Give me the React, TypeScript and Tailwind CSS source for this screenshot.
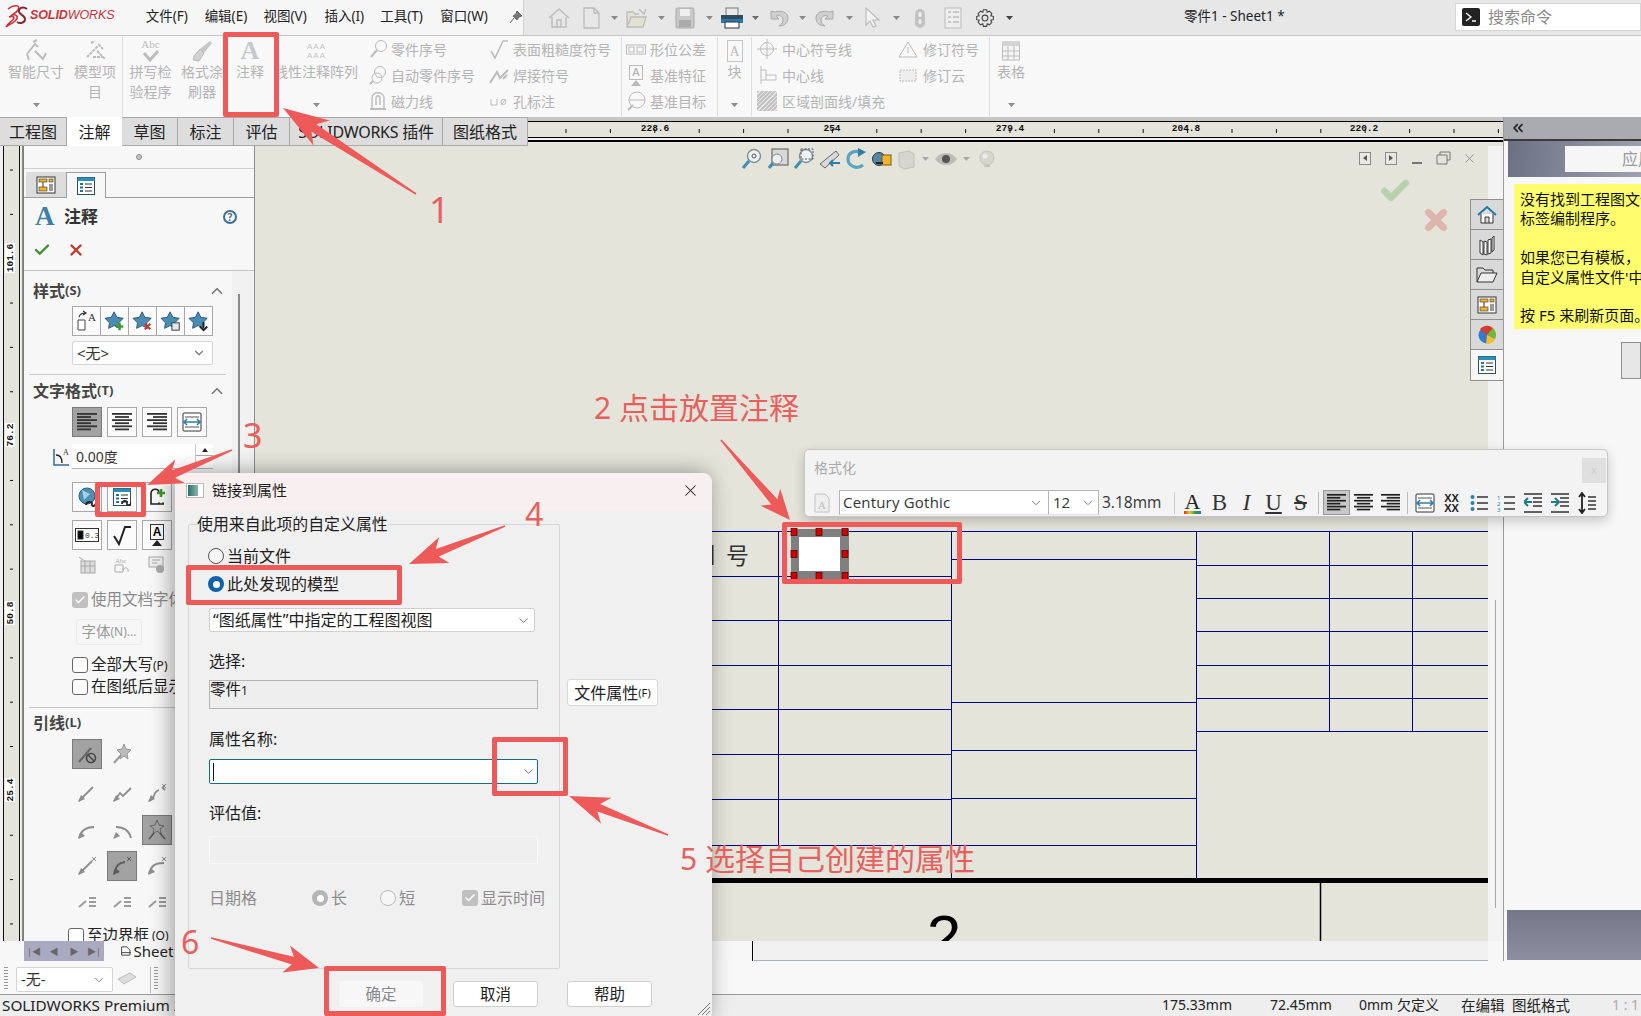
import React from "react";
import { Check, X, ChevronDown, ChevronUp, ChevronsLeft } from "lucide-react";

const G = "#bcbcbc";
const RED = "#ee5a5a";

type SP = { w?: number; h?: number; vb?: string; children?: React.ReactNode; className?: string };
const S = ({ w = 24, h = 24, vb, children, className }: SP) => (
  <svg width={w} height={h} viewBox={vb ?? `0 0 ${w} ${h}`} fill="none" className={className}>
    {children}
  </svg>
);

const Caret = ({ c = "#6b6b6b" }: { c?: string }) => (
  <S w={7} h={4}>
    <polygon points="0,0 7,0 3.5,4" fill={c} />
  </S>
);

/* ---------- top toolbar ---------- */
const Logo = () => (
  <div className="flex w-[146px] items-center pl-[5px] pb-[2px]">
    <S w={24} h={26}>
      <path d="M3 6 C9 1 16 2 13 7 C11 10 8 11 7 12 C12 11 14 14 10 18 C7 21 3 22 1 24 C4 19 8 18 9 15 C9 13 6 13 4 14" stroke="#c8343a" strokeWidth="1.6" />
      <path d="M22 6 C18 3 13 5 14 9 C15 12 20 12 20 16 C20 20 15 21 12 19" stroke="#8a2430" strokeWidth="2" />
    </S>
    <span className="ml-[1px] text-[12.5px] leading-none tracking-[-0.1px] font-['Liberation_Sans',sans-serif] whitespace-nowrap">
      <span className="font-bold italic text-[#c8343a]">SOLID</span>
      <span className="italic text-[#c8343a]">WORKS</span>
    </span>
  </div>
);

const HomeIc = ({ c = G }: { c?: string }) => (
  <S>
    <path d="M2 12 L12 3 L22 12 M5 11 V21 H19 V11 M10 21 V14 H14 V21" stroke={c} strokeWidth="1.4" />
  </S>
);
const DocIc = () => (
  <S>
    <path d="M5 2 H15 L20 7 V22 H5 Z M15 2 V7 H20" stroke={G} strokeWidth="1.3" />
  </S>
);
const FolderTopIc = () => (
  <S>
    <path d="M3 21 V6 H9 L11 8 H15 M3 21 L7 11 H22 L19 21 Z" stroke={G} strokeWidth="1.3" fill="#e2e2d2" />
    <path d="M15 3 L20 8 L22 3" stroke={G} strokeWidth="1.4" />
  </S>
);
const SaveIc = () => (
  <S>
    <rect x="3" y="2" width="18" height="20" rx="1.5" fill="#c8c8c8" stroke="#aaa" />
    <rect x="7" y="3" width="10" height="7" fill="#eee" />
    <rect x="6" y="14" width="12" height="7" fill="#aaa" />
  </S>
);
const PrintIc = () => (
  <S w={24} h={24}>
    <rect x="6" y="2" width="12" height="8" fill="#e9e9e9" stroke="#777" />
    <rect x="1" y="9" width="22" height="8" fill="#35495c" />
    <rect x="1" y="13" width="22" height="4" fill="#1f7bb5" />
    <rect x="5" y="16" width="14" height="6" fill="#fff" stroke="#333" />
  </S>
);
const UndoIc = ({ flip }: { flip?: boolean }) => (
  <S className={flip ? "-scale-x-100" : ""}>
    <path d="M5 5 V13 H13 L10 10 C13 9 17 10 17 14 C17 17 15 19 13 20 C18 20 22 17 22 12 C22 6 15 4 9 6 Z" fill="#cfcfcf" stroke="#aaa" />
  </S>
);
const CursorIc = () => (
  <S>
    <path d="M6 2 V19 L10 15 L13 21 L16 20 L13 14 L19 14 Z" stroke={G} strokeWidth="1.2" fill="#f2f2f2" />
  </S>
);
const MouseIc = () => (
  <S w={14} h={24}>
    <rect x="2" y="3" width="10" height="19" rx="5" fill="#c3c3c3" />
    <rect x="5.5" y="6" width="3" height="5" rx="1.5" fill="#eee" />
    <rect x="5.5" y="13" width="3" height="5" rx="1.5" fill="#eee" />
  </S>
);
const ListTopIc = () => (
  <S>
    <rect x="4" y="2" width="16" height="20" stroke={G} fill="#eee" />
    <path d="M7 6 H10 M7 11 H10 M7 16 H10 M12 6 H18 M12 11 H18 M12 16 H18" stroke={G} strokeWidth="1.6" />
  </S>
);
const GearIc = () => (
  <S w={20} h={20} vb="0 0 24 24">
    <circle cx="12" cy="12" r="3.5" stroke="#444" strokeWidth="1.3" />
    <path d="M10 2 H14 L14.6 5 L17.3 3.8 L20.2 6.7 L19 9.4 L22 10 V14 L19 14.6 L20.2 17.3 L17.3 20.2 L14.6 19 L14 22 H10 L9.4 19 L6.7 20.2 L3.8 17.3 L5 14.6 L2 14 V10 L5 9.4 L3.8 6.7 L6.7 3.8 L9.4 5 Z" stroke="#444" strokeWidth="1.3" />
  </S>
);

const TopBar = () => (
  <div className="flex h-[36px] shrink-0 border-b border-[#c4c4c4] bg-[#e7e7e7]">
    <div className="flex w-[524px] shrink-0 items-center border-r border-[#d2d2d2] bg-[#f6f6f6] pb-[2px] text-[13.5px] text-[#222]">
      <Logo />
      <span className="w-[59px] whitespace-nowrap">文件(F)</span>
      <span className="w-[59px] whitespace-nowrap">编辑(E)</span>
      <span className="w-[61px] whitespace-nowrap">视图(V)</span>
      <span className="w-[56px] whitespace-nowrap">插入(I)</span>
      <span className="w-[60px] whitespace-nowrap">工具(T)</span>
      <span className="w-[69px] whitespace-nowrap">窗口(W)</span>
      <svg width="14" height="14" viewBox="0 0 14 14"><path d="M8 1 L13 6 L10 7 L8 10 L4 6 L7 4 Z M5 8 L1 13" stroke="#666" fill="#777" /></svg>
    </div>
    <div className="w-[19px]" />
    <div className="flex w-[32px] items-center justify-center"><HomeIc /></div>
    <div className="flex w-[32px] items-center justify-center"><DocIc /></div>
    <div className="flex w-[14px] items-center justify-center"><Caret c="#888" /></div>
    <div className="flex w-[30px] items-center justify-center"><FolderTopIc /></div>
    <div className="flex w-[20px] items-center justify-center"><Caret c="#888" /></div>
    <div className="flex w-[28px] items-center justify-center"><SaveIc /></div>
    <div className="flex w-[20px] items-center justify-center"><Caret c="#888" /></div>
    <div className="flex w-[26px] items-center justify-center"><PrintIc /></div>
    <div className="flex w-[20px] items-center justify-center"><Caret /></div>
    <div className="flex w-[26px] items-center justify-center"><UndoIc /></div>
    <div className="flex w-[22px] items-center justify-center"><Caret c="#888" /></div>
    <div className="flex w-[26px] items-center justify-center"><UndoIc flip /></div>
    <div className="flex w-[20px] items-center justify-center"><Caret c="#888" /></div>
    <div className="flex w-[26px] items-center justify-center"><CursorIc /></div>
    <div className="flex w-[22px] items-center justify-center"><Caret c="#888" /></div>
    <div className="flex w-[26px] items-center justify-center"><MouseIc /></div>
    <div className="flex w-[40px] items-center justify-center"><ListTopIc /></div>
    <div className="flex w-[24px] items-center justify-center"><GearIc /></div>
    <div className="flex w-[24px] items-center justify-center"><Caret c="#444" /></div>
    <div className="ml-[163px] flex items-center pb-[2px] text-[13.5px] text-[#222] whitespace-nowrap">零件1 - Sheet1 *</div>
    <div className="ml-auto mt-[3px] flex h-[28px] w-[186px] items-center border border-[#d6d6d6] bg-white pl-[6px]">
      <div className="flex h-[18px] w-[18px] items-center justify-center rounded-[2px] bg-[#222]">
        <svg width="12" height="12" viewBox="0 0 12 12"><path d="M1 2 L6 6 L1 10 M7 10 H11" stroke="#fff" strokeWidth="1.3" fill="none" /></svg>
      </div>
      <span className="ml-[8px] text-[16px] text-[#8a8a8a]">搜索命令</span>
    </div>
  </div>
);

/* ---------- ribbon ---------- */
const DimIc = () => (
  <S>
    <path d="M3 15 L11 5 L14 8 M9 3 L13 1 M5 21 L3 15 M11 12 L19 20 L22 14" stroke={G} strokeWidth="2" />
  </S>
);
const ModelIc = () => (
  <S>
    <path d="M4 18 L16 6 L20 10 M8 4 L12 2 M10 18 L20 18 M14 12 L22 20" stroke={G} strokeWidth="2" strokeDasharray="3 1" />
  </S>
);
const SpellIc = () => (
  <div className="flex h-[24px] w-[24px] flex-col items-center">
    <span className="font-['Liberation_Serif',serif] text-[11px] leading-[11px] text-[#bbb]">Abc</span>
    <svg width="20" height="12" viewBox="0 0 20 12"><path d="M3 3 L9 10 L17 1" stroke={G} strokeWidth="3" fill="none" /></svg>
  </div>
);
const BrushIc = () => (
  <S>
    <path d="M20 2 L22 4 L14 14 L10 10 Z" fill="#c6c6c6" />
    <path d="M10 10 L14 14 L9 22 L3 21 L4 17 Z" fill="#d2d2d2" stroke="#bbb" />
  </S>
);
const NoteA = () => (
  <span className="block h-[26px] text-[26px] leading-[26px] font-bold font-['Liberation_Serif',serif] text-[#c5c9cc]">A</span>
);
const PatternIc = () => (
  <div className="grid h-[24px] grid-cols-3 content-center gap-x-[1px] text-[8px] leading-[9px] text-[#c4c4c4] font-['Liberation_Sans',sans-serif]">
    <span>A</span><span>A</span><span>A</span><span>A</span><span>A</span><span>A</span>
  </div>
);
const BlockIc = () => (
  <div className="flex h-[22px] w-[16px] items-center justify-center border border-[#c4c4c4] font-['Liberation_Serif',serif] text-[14px] text-[#bbb]">A</div>
);
const TableIc = () => (
  <S w={18} h={20}>
    <rect x="0.5" y="1" width="17" height="18" stroke={G} fill="#f4f4f4" />
    <rect x="0.5" y="1" width="17" height="4" fill="#d3d3d3" />
    <path d="M0 10 H18 M0 15 H18 M6 5 V19 M12 5 V19" stroke={G} />
  </S>
);

const Big = ({ w, icon, lines, caret }: { w: string; icon: React.ReactNode; lines: string[]; caret?: boolean }) => (
  <div className={`flex h-full shrink-0 flex-col items-center ${w}`}>
    <div className="mt-[4px] flex h-[22px] items-center justify-center">{icon}</div>
    <div className="text-center text-[14px] leading-[20px] text-[#b4b4b4] whitespace-nowrap">
      {lines.map((l) => (
        <div key={l}>{l}</div>
      ))}
    </div>
    {caret && (
      <div className="mt-auto mb-[10px]">
        <Caret c="#8a8a8a" />
      </div>
    )}
  </div>
);
const Sep = () => <div className="my-[1px] w-px shrink-0 bg-[#dedede]" />;

const SmallRow = ({ zone, icon, label }: { zone: string; icon: React.ReactNode; label: string }) => (
  <div className="flex h-[26px] items-center whitespace-nowrap text-[14px] text-[#b4b4b4]">
    <div className={`flex justify-center ${zone}`}>{icon}</div>
    {label}
  </div>
);

const Mini = ({ children }: { children: React.ReactNode }) => <S w={20} h={20}>{children}</S>;
const I1 = () => (<Mini><circle cx="13" cy="7" r="5.5" stroke={G} /><path d="M9 11 L3 18" stroke={G} strokeWidth="2" /></Mini>);
const I2 = () => (<Mini><circle cx="12" cy="7" r="5.5" stroke={G} /><circle cx="9" cy="13" r="5" stroke={G} /><path d="M5 16 L2 19" stroke={G} strokeWidth="2" /></Mini>);
const I3 = () => (<Mini><path d="M4 18 V7 C4 0 16 0 16 7 V18 M8 14 V7 C8 4 12 4 12 7 V14" stroke={G} strokeWidth="1.4" /><path d="M2 18 H18" stroke={G} strokeWidth="2" /></Mini>);
const I4 = () => (<Mini><path d="M2 12 L6 19 L14 2 H19" stroke={G} strokeWidth="1.6" /></Mini>);
const I5 = () => (<Mini><path d="M1 18 L8 7 L11 13 L19 5 M14 14 L18 10" stroke={G} strokeWidth="2" /></Mini>);
const I6 = () => (<Mini><path d="M2 8 V14 H8 V8 M12 14 L17 8" stroke={G} /><circle cx="14.5" cy="11" r="2.5" stroke={G} /></Mini>);
const I7 = () => (<Mini><rect x="0.5" y="6" width="19" height="9" stroke={G} /><rect x="3" y="8" width="5" height="5" stroke={G} /><rect x="11" y="8" width="6" height="5" stroke={G} /></Mini>);
const I8 = () => (<div className="flex w-[14px] flex-col items-center"><div className="h-[15px] w-[14px] border border-[#bbb] text-center font-['Liberation_Sans',sans-serif] text-[11px] leading-[13px] text-[#aaa]">A</div><div className="h-0 w-0 border-x-[5px] border-b-[6px] border-x-transparent border-b-[#bbb]" /></div>);
const I9 = () => (<Mini><circle cx="11" cy="9" r="8" stroke={G} /><path d="M3 9 H19" stroke={G} /><path d="M7 14 L2 19" stroke={G} strokeWidth="2" /></Mini>);
const I10 = () => (<Mini><circle cx="10" cy="10" r="6.5" stroke={G} /><path d="M10 0 V20 M0 10 H20" stroke={G} /></Mini>);
const I11 = () => (<Mini><path d="M4 1 V19 M4 5 H9 V15 H4 M9 10 H19 V15 H9" stroke={G} /></Mini>);
const I12 = () => (
  <div className="h-[20px] w-[20px] bg-[repeating-linear-gradient(135deg,#c4c4c4,#c4c4c4_2px,#e6e6e6_2px,#e6e6e6_3px)]" />
);
const I13 = () => (<Mini><path d="M10 3 L19 18 H1 Z" stroke={G} /><path d="M10 8 V14" stroke={G} /></Mini>);
const I14 = () => (<Mini><rect x="2" y="5" width="16" height="11" stroke={G} strokeDasharray="2 1" fill="#eee" /></Mini>);

const Ribbon = () => (
  <div className="flex h-[81px] shrink-0 bg-[#f8f8f8]">
    <Big w="w-[72px]" icon={<DimIc />} lines={["智能尺寸"]} caret />
    <Big w="w-[46px]" icon={<ModelIc />} lines={["模型项", "目"]} />
    <div className="w-[4px] shrink-0" />
    <Sep />
    <Big w="w-[55px]" icon={<SpellIc />} lines={["拼写检", "验程序"]} />
    <Big w="w-[48px]" icon={<BrushIc />} lines={["格式涂", "刷器"]} />
    <Big w="w-[48px]" icon={<NoteA />} lines={["注释"]} />
    <Big w="w-[84px]" icon={<PatternIc />} lines={["线性注释阵列"]} caret />
    <div className="w-[7px] shrink-0" />
    <div className="w-[120px] shrink-0">
      <SmallRow zone="w-[26px]" icon={<I1 />} label="零件序号" />
      <SmallRow zone="w-[26px]" icon={<I2 />} label="自动零件序号" />
      <SmallRow zone="w-[26px]" icon={<I3 />} label="磁力线" />
    </div>
    <div className="w-[136px] shrink-0">
      <SmallRow zone="w-[28px]" icon={<I4 />} label="表面粗糙度符号" />
      <SmallRow zone="w-[28px]" icon={<I5 />} label="焊接符号" />
      <SmallRow zone="w-[28px]" icon={<I6 />} label="孔标注" />
    </div>
    <Sep />
    <div className="w-[95px] shrink-0">
      <SmallRow zone="w-[28px]" icon={<I7 />} label="形位公差" />
      <SmallRow zone="w-[28px]" icon={<I8 />} label="基准特征" />
      <SmallRow zone="w-[28px]" icon={<I9 />} label="基准目标" />
    </div>
    <Sep />
    <Big w="w-[33px]" icon={<BlockIc />} lines={["块"]} caret />
    <Sep />
    <div className="w-[140px] shrink-0">
      <SmallRow zone="w-[30px]" icon={<I10 />} label="中心符号线" />
      <SmallRow zone="w-[30px]" icon={<I11 />} label="中心线" />
      <SmallRow zone="w-[30px]" icon={<I12 />} label="区域剖面线/填充" />
    </div>
    <div className="w-[97px] shrink-0">
      <SmallRow zone="w-[31px]" icon={<I13 />} label="修订符号" />
      <SmallRow zone="w-[31px]" icon={<I14 />} label="修订云" />
    </div>
    <Sep />
    <Big w="w-[42px]" icon={<TableIc />} lines={["表格"]} caret />
  </div>
);

/* ---------- tabs + rulers ---------- */
const tick = "#111";
const HRuler = () => {
  const ticks: number[] = [];
  for (let x = 566; x < 1503; x += 44.4) ticks.push(x);
  const labels: [number, string][] = [[655, "228.6"], [832, "254"], [1010, "279.4"], [1186, "204.8"], [1364, "220.2"]];
  return (
    <svg width="975" height="15" viewBox="528 0 975 15" className="block">
      {ticks.map((x) => (
        <line key={x} x1={x} x2={x} y1={7} y2={11} stroke={tick} />
      ))}
      {labels.map(([x, t]) => (
        <text key={t} x={x} y={9} textAnchor="middle" fontSize="9.5" fontFamily="Liberation Mono" fill="#111" fontWeight="700">{t}</text>
      ))}
    </svg>
  );
};

const TabRow = () => (
  <div className="flex h-[29px] shrink-0 bg-[#e4e4da]">
    <div className="flex w-[528px] shrink-0 text-[16px] text-[#222]">
      <div className="flex w-[67px] items-center justify-center border border-l-0 border-[#a9a9a9] bg-[#dddddd]">工程图</div>
      <div className="flex w-[55px] items-center justify-center bg-white">注解</div>
      <div className="flex w-[56px] items-center justify-center border border-l-0 border-[#a9a9a9] bg-[#dddddd]">草图</div>
      <div className="flex w-[56px] items-center justify-center border border-l-0 border-[#a9a9a9] bg-[#dddddd]">标注</div>
      <div className="flex w-[56px] items-center justify-center border border-l-0 border-[#a9a9a9] bg-[#dddddd]">评估</div>
      <div className="flex w-[153px] items-center justify-center border border-l-0 border-[#a9a9a9] bg-[#dddddd] tracking-[-0.25px] whitespace-nowrap">SOLIDWORKS 插件</div>
      <div className="flex w-[85px] items-center justify-center border border-l-0 border-[#a9a9a9] bg-[#dddddd]">图纸格式</div>
    </div>
    <div className="flex-1">
      <div className="h-[4px] bg-[#c6c6c6]" />
      <div className="h-[17px] border-y border-black bg-[#e4e4da]">
        <HRuler />
      </div>
      <div className="h-[4px] border-b-2 border-black bg-[#f2f2f2]" />
    </div>
  </div>
);

const VRuler = () => {
  const ys: number[] = [];
  for (let y = 170; y < 941; y += 44.35) ys.push(y);
  const labels: [number, string][] = [[258, "101.6"], [435, "76.2"], [613, "50.8"], [790, "25.4"]];
  return (
    <div className="w-[24px] shrink-0 bg-[#f0f0f0]">
      <svg width="24" height="795" viewBox="0 146 24 795" className="block">
        <rect x="3" y="146" width="17" height="795" fill="#e4e4da" />
        <path d="M3.5 146 V941 M19.5 146 V941 M23 146 V941" stroke="#111" />
        {ys.map((y) => (
          <line key={y} x1={10} x2={13} y1={y} y2={y} stroke="#111" />
        ))}
        {labels.map(([y, t]) => (
          <g key={t} transform={`rotate(-90 13 ${y})`}>
            <rect x={13 - t.length * 3} y={y - 8} width={t.length * 6} height={10} fill="#fff" />
            <text x={13} y={y} textAnchor="middle" fontSize="9.5" fontWeight="700" fontFamily="Liberation Mono" fill="#111">{t}</text>
          </g>
        ))}
      </svg>
    </div>
  );
};

/* ---------- property panel ---------- */
const PropIc = () => (
  <S w={20} h={18}>
    <rect x="1" y="1" width="18" height="16" fill="#fff" stroke="#333" />
    <rect x="3" y="3" width="8" height="3" fill="#f0b429" stroke="#333" strokeWidth="0.6" />
    <rect x="3" y="11" width="8" height="4" fill="#f0b429" stroke="#333" strokeWidth="0.6" />
    <path d="M7 6 V11" stroke="#333" />
    <rect x="13" y="3" width="4" height="3" fill="#f0b429" stroke="#333" strokeWidth="0.6" />
    <rect x="13" y="8" width="4" height="7" fill="#9a9a9a" />
  </S>
);
const ListIc = ({ link }: { link?: boolean }) => (
  <S w={18} h={18}>
    <rect x="0.5" y="0.5" width="17" height="17" fill="#fff" stroke="#2b4f66" />
    <rect x="0.5" y="0.5" width="17" height="3.5" fill="#2a90b8" />
    <path d="M3 7 H6 M3 10.5 H6 M3 14 H6" stroke="#2b6f96" strokeWidth="1.8" />
    <path d="M8 7 H15 M8 10.5 H15 M8 14 H15" stroke="#333" />
    {link && <path d="M9 16 C9 12 15 12 14 15 C13 18 18 18 18 14" stroke="#222" strokeWidth="1.6" />}
  </S>
);
const Star = ({ badge }: { badge?: React.ReactNode }) => (
  <S w={22} h={22} vb="0 0 24 24">
    <polygon points="11,2 14,8 21,9 16,14 17,20 11,17 5,20 6,14 1,9 8,8" fill="#4a8db3" stroke="#27536e" />
    {badge}
  </S>
);
const Btn = ({ children, active }: { children?: React.ReactNode; active?: boolean }) => (
  <div className={`flex h-[30px] w-[30px] items-center justify-center border ${active ? "border-[#7a7a7a] bg-[#a2a2a2]" : "border-[#a8a8a8] bg-[#fbfbfb]"}`}>{children}</div>
);
const Plain = ({ children, active }: { children?: React.ReactNode; active?: boolean }) => (
  <div className={`flex h-[30px] w-[30px] items-center justify-center ${active ? "border border-[#7a7a7a] bg-[#a2a2a2]" : ""}`}>{children}</div>
);
const Align = ({ k, s = 20, c = "#333" }: { k: "l" | "c" | "r"; s?: number; c?: string }) => {
  const ls = [1, 0.7, 1, 0.7, 1, 0.7];
  return (
    <svg width={s} height={s} viewBox="0 0 20 20">
      {ls.map((l, i) => {
        const w = 20 * l;
        const x = k === "l" ? 0 : k === "c" ? (20 - w) / 2 : 20 - w;
        return <rect key={i} x={x} y={1 + i * 3.1} width={w} height={1.8} fill={c} />;
      })}
    </svg>
  );
};
const WidthIc = () => (
  <S w={22} h={22}>
    <rect x="2" y="2" width="18" height="18" rx="1" stroke="#333" fill="#fff" />
    <path d="M4 6 H18 M4 16 H18" stroke="#555" />
    <path d="M3 11 H19 M6 8 L3 11 L6 14 M16 8 L19 11 L16 14" stroke="#2f7ea8" strokeWidth="1.6" />
  </S>
);
const Leader = ({ v = 0, c = "#8d8d8d" }: { v?: number; c?: string }) => {
  const d = ["M3 19 L17 5", "M3 19 L9 11 L12 14 L20 6", "M3 19 C10 17 6 10 13 8 M16 5 L19 8", "M3 19 C5 11 10 8 18 8", "M20 19 C18 11 13 8 5 8", "M3 19 L16 6", "M3 19 C5 10 8 8 14 7", "M3 19 C5 10 10 8 18 8"][v];
  return (
    <S w={22} h={22}>
      <path d={d} stroke={c} strokeWidth="1.8" />
      <polygon points="2,20 5,13 9,17" fill={c} />
      {v === 2 || v === 5 || v === 6 || v === 7 ? <path d="M16 2 L20 6 M20 2 L16 6" stroke={c} /> : null}
    </S>
  );
};
const LeaderList = () => (
  <S w={22} h={22}>
    <path d="M3 17 L10 11" stroke="#9c9c9c" strokeWidth="2" />
    <path d="M13 8 H20 M13 12 H20 M13 16 H20" stroke="#9c9c9c" strokeWidth="2" />
  </S>
);
const CheckBox = ({ gray }: { gray?: boolean }) =>
  gray ? (
    <div className="flex h-[16px] w-[16px] shrink-0 items-center justify-center rounded-[3px] bg-[#c0c0c0]">
      <Check size={12} color="#fff" strokeWidth={3} />
    </div>
  ) : (
    <div className="h-[16px] w-[16px] shrink-0 rounded-[3px] border border-[#666] bg-[#fff]" />
  );
const HeaderLine = ({ t, suf, arrow }: { t: string; suf: string; arrow?: boolean }) => (
  <div className="flex h-[26px] items-center pl-[9px] pr-[6px] text-[16px] font-bold text-[#444]">
    <span>{t}</span>
    <span className="text-[13px]">{suf}</span>
    {arrow && <ChevronUp size={18} strokeWidth={2.2} color="#777" className="ml-auto" />}
  </div>
);

const Panel = () => (
  <div className="flex w-[231px] shrink-0 flex-col overflow-hidden border-r border-[#8d8d8d] bg-[#f7f7f7]">
    <div className="flex h-[23px] shrink-0 items-center justify-center border-b border-[#cfcfcf]">
      <div className="h-[6px] w-[6px] rounded-full border border-[#8c8c8c] bg-[#c4c4c4]" />
    </div>
    <div className="flex h-[29px] shrink-0 items-end border-b border-[#9e9e9e] pl-[2px]">
      <div className="flex h-[25px] w-[40px] items-center justify-center bg-[#dcdcdc]"><PropIc /></div>
      <div className="-mb-px flex h-[26px] w-[40px] items-center justify-center border border-b-0 border-[#9e9e9e] bg-[#f7f7f7]"><ListIc /></div>
    </div>
    <div className="flex h-[37px] shrink-0 items-center pl-[11px] pr-[14px]">
      <span className="w-[29px] text-[27px] leading-none font-bold font-['Liberation_Serif',serif] text-[#3f7fa8]">A</span>
      <span className="text-[17px] font-bold text-[#333]">注释</span>
      <div className="ml-auto mr-[3px] flex h-[14px] w-[14px] items-center justify-center rounded-full border-2 border-[#3f6f8f] text-[10px] font-bold leading-none text-[#3f6f8f]">?</div>
    </div>
    <div className="flex h-[36px] shrink-0 items-start gap-[16px] border-b border-[#c4c4c4] pl-[9px] pt-[6px]">
      <Check size={18} color="#3f8f2f" strokeWidth={3.2} />
      <X size={18} color="#c0392b" strokeWidth={3.2} />
    </div>
    <div className="flex min-h-0 flex-1">
      <div className="w-[208px] shrink-0 overflow-hidden">
        <div className="mt-[7px]"><HeaderLine t="样式" suf="(S)" arrow /></div>
        <div className="ml-[48px] mt-[2px] flex h-[30px] w-[141px] border border-[#a8a8a8] bg-[#fbfbfb]">
          <div className="flex w-[28px] items-center justify-center border-r border-[#a8a8a8]">
            <svg width="22" height="22" viewBox="0 0 22 22"><path d="M2 10 H9 V20 H2 Z" stroke="#444" fill="#fff" /><path d="M3 7 C4 4 6 3 9 3 M7 1 L10 3 L7 5" stroke="#333" strokeWidth="1.2" fill="none" /><text x="12" y="11" fontSize="11" fontFamily="Liberation Serif" fill="#333">A</text></svg>
          </div>
          <div className="flex w-[28px] items-center justify-center border-r border-[#a8a8a8]"><Star badge={<path d="M13 18 H21 M17 14 V22" stroke="#3c9a2f" strokeWidth="2.6" />} /></div>
          <div className="flex w-[28px] items-center justify-center border-r border-[#a8a8a8]"><Star badge={<path d="M14 15 L20 21 M20 15 L14 21" stroke="#c0392b" strokeWidth="2.2" />} /></div>
          <div className="flex w-[28px] items-center justify-center border-r border-[#a8a8a8]"><Star badge={<rect x="13" y="14" width="8" height="8" fill="#dfe9f0" stroke="#333" />} /></div>
          <div className="flex w-[27px] items-center justify-center"><Star badge={<path d="M17 13 V19 M13 18 L17 22 L21 18" stroke="#222" strokeWidth="2" />} /></div>
        </div>
        <div className="ml-[48px] mt-[5px] flex h-[24px] w-[141px] items-center rounded-[2px] border border-[#d4d4d4] bg-white pl-[4px] pr-[6px] text-[15px] text-[#333]">
          {"<无>"}
          <ChevronDown size={14} color="#777" className="ml-auto" />
        </div>
        <div className="ml-[5px] mt-[9px] h-px w-[197px] bg-[#c8c8c8]" />
        <div className="mt-[3px]"><HeaderLine t="文字格式" suf="(T)" arrow /></div>
        <div className="ml-[48px] mt-[3px] flex gap-[5px]">
          <Btn active><Align k="l" /></Btn>
          <Btn><Align k="c" /></Btn>
          <Btn><Align k="r" /></Btn>
          <Btn><WidthIc /></Btn>
        </div>
        <div className="ml-[26px] mt-[7px] flex h-[25px] items-center">
          <div className="flex w-[22px] justify-center">
            <svg width="18" height="20" viewBox="0 0 18 20"><path d="M2 2 V18 H17" stroke="#2f6f96" strokeWidth="1.5" fill="none" /><path d="M4 8 C8 8 10 11 10 16" stroke="#222" strokeWidth="1.4" fill="none" /><text x="11" y="8" fontSize="8" fontFamily="Liberation Serif" fill="#333">A</text></svg>
          </div>
          <div className="flex h-[25px] w-[141px] items-center border-b border-[#b5b5b5] bg-white pl-[4px] text-[14px] text-[#333]">
            0.00度
            <div className="ml-auto flex h-[24px] w-[18px] flex-col border-l border-[#ccc]">
              <div className="flex h-[12px] items-center justify-center border-b border-[#aaa]"><div className="h-0 w-0 border-x-[3px] border-b-[4px] border-x-transparent border-b-[#222]" /></div>
            </div>
          </div>
        </div>
        <div className="ml-[48px] mt-[13px] flex gap-[5px]">
          <Btn><svg width="22" height="22" viewBox="0 0 22 22"><circle cx="11" cy="10" r="8" fill="#4c8fb5" stroke="#2b5f7f" /><path d="M6 4 L14 8 L8 14 Z" fill="#a7cfe2" /><path d="M10 19 C10 15 17 15 16 18 C15 21 20 21 20 16" stroke="#222" strokeWidth="1.8" fill="none" /></svg></Btn>
          <Btn><ListIc link /></Btn>
          <Btn><svg width="22" height="22" viewBox="0 0 22 22"><path d="M5 8 C5 2 12 2 13 6 M5 8 V18 H18" stroke="#222" strokeWidth="1.6" fill="none" /><path d="M15 3 V11 M11 7 H19" stroke="#3c9a2f" strokeWidth="2.6" /><path d="M12 17 H14 M16 17 H18" stroke="#222" /></svg></Btn>
        </div>
        <div className="ml-[48px] mt-[8px] flex gap-[5px]">
          <Btn><svg width="24" height="14" viewBox="0 0 24 14"><rect x="0.5" y="0.5" width="23" height="13" fill="#fff" stroke="#333" /><rect x="3" y="3" width="5" height="8" stroke="#333" /><text x="10" y="10" fontSize="8" fontFamily="Liberation Mono" fill="#333">0.3</text></svg></Btn>
          <Btn><svg width="22" height="22" viewBox="0 0 22 22"><path d="M3 12 L8 20 L14 3 H20" stroke="#222" strokeWidth="2" fill="none" /></svg></Btn>
          <Btn><div className="flex flex-col items-center"><div className="h-[16px] w-[14px] border border-[#333] text-center font-['Liberation_Sans',sans-serif] text-[12px] leading-[14px] font-bold">A</div><div className="h-0 w-0 border-x-[5px] border-b-[6px] border-x-transparent border-b-[#222]" /></div></Btn>
        </div>
        <div className="ml-[48px] mt-[6px] flex h-[20px] gap-[5px]">
          <div className="flex w-[30px] justify-center"><svg width="18" height="18" viewBox="0 0 18 18"><rect x="3" y="5" width="14" height="12" fill="#ddd" stroke="#aaa" /><path d="M7 5 V17 M12 5 V17 M3 10 H17" stroke="#aaa" /><path d="M1 1 L7 5" stroke="#aaa" /></svg></div>
          <div className="flex w-[30px] justify-center"><svg width="18" height="18" viewBox="0 0 18 18"><text x="2" y="7" fontSize="7" fontFamily="Liberation Serif" fill="#aaa">Abc</text><path d="M2 9 H10 V16 H2 Z M10 14 C12 10 16 12 15 16" stroke="#aaa" fill="none" /></svg></div>
          <div className="flex w-[30px] justify-center"><svg width="18" height="18" viewBox="0 0 18 18"><rect x="1" y="1" width="14" height="10" stroke="#aaa" fill="#eee" /><path d="M4 4 H12 M4 7 H9" stroke="#aaa" /><circle cx="12" cy="13" r="4" fill="#aaa" /></svg></div>
        </div>
        <div className="ml-[48px] mt-[15px] flex h-[18px] items-center gap-[3px] whitespace-nowrap text-[15.5px] text-[#8a8a8a]">
          <CheckBox gray /> 使用文档字体
        </div>
        <div className="ml-[52px] mt-[10px] flex h-[26px] w-[66px] items-center justify-center rounded-[3px] border border-[#ececec] bg-[#f7f7f7] text-[14.5px] text-[#999]">
          字体<span className="text-[12px]">(N)...</span>
        </div>
        <div className="ml-[48px] mt-[11px] flex h-[18px] items-center gap-[3px] whitespace-nowrap text-[15.5px] text-[#222]">
          <CheckBox /> <span>全部大写<span className="text-[12px]">(P)</span></span>
        </div>
        <div className="ml-[48px] mt-[4px] flex h-[18px] items-center gap-[3px] whitespace-nowrap text-[15.5px] text-[#222]">
          <CheckBox /> 在图纸后显示
        </div>
        <div className="ml-[5px] mt-[11px] h-px w-[197px] bg-[#c8c8c8]" />
        <div className="mt-[2px]"><HeaderLine t="引线" suf="(L)" /></div>
        <div className="ml-[48px] mt-[3px] flex gap-[5px]">
          <Plain active>
            <svg width="22" height="22" viewBox="0 0 22 22"><path d="M3 19 L15 5" stroke="#666" strokeWidth="2" /><circle cx="15" cy="15" r="4.5" fill="#a2a2a2" stroke="#444" strokeWidth="1.6" /><path d="M12 12 L18 18" stroke="#444" strokeWidth="1.4" /></svg>
          </Plain>
          <Plain>
            <svg width="22" height="22" viewBox="0 0 22 22"><path d="M3 20 L11 11" stroke="#999" strokeWidth="2" /><polygon points="13,1 15,6 20,7 16,11 17,16 13,13 9,16 10,11 6,7 11,6" fill="#bbb" stroke="#999" /></svg>
          </Plain>
        </div>
        <div className="ml-[48px] mt-[9px] flex gap-[5px]">
          <Plain><Leader v={0} /></Plain>
          <Plain><Leader v={1} /></Plain>
          <Plain><Leader v={2} /></Plain>
        </div>
        <div className="ml-[48px] mt-[7px] flex gap-[5px]">
          <Plain><Leader v={3} /></Plain>
          <Plain><Leader v={4} /></Plain>
          <Plain active>
            <svg width="22" height="22" viewBox="0 0 22 22"><polygon points="11,1 13,6 18,7 14,10 15,15 11,12 7,15 8,10 4,7 9,6" fill="#a2a2a2" stroke="#666" /><path d="M8 14 L3 20 M14 14 L19 20" stroke="#555" strokeWidth="1.6" /></svg>
          </Plain>
        </div>
        <div className="ml-[48px] mt-[6px] flex gap-[5px]">
          <Plain><Leader v={5} /></Plain>
          <Plain active><Leader v={6} c="#5c5c5c" /></Plain>
          <Plain><Leader v={7} /></Plain>
        </div>
        <div className="ml-[48px] mt-[5px] flex gap-[5px]">
          <Plain><LeaderList /></Plain>
          <Plain><LeaderList /></Plain>
          <Plain><LeaderList /></Plain>
        </div>
        <div className="ml-[44px] mt-[11px] flex h-[18px] items-center gap-[3px] whitespace-nowrap text-[15.5px] text-[#222]">
          <CheckBox /> 至边界框<span className="text-[12px]">(O)</span>
        </div>
      </div>
      <div className="relative w-[22px] shrink-0 bg-[#f1f1f1]">
        <div className="absolute left-[6px] top-[23px] bottom-0 w-[2px] bg-[#8a8a8a]" />
      </div>
    </div>
  </div>
);

/* ---------- canvas ---------- */
const blue = "#00008a";
const Drawing = () => {
  const h = (y: number, a: number, b: number, k: string) => <line key={k} x1={a} x2={b} y1={y + 0.5} y2={y + 0.5} stroke={blue} strokeWidth={1} />;
  const v = (x: number, a: number, b: number, k: string) => <line key={k} x1={x + 0.5} x2={x + 0.5} y1={a} y2={b} stroke={blue} strokeWidth={1} />;
  return (
    <svg width="1233" height="795" viewBox="255 146 1233 795" className="block">
      {h(531, 700, 1488, "t")}
      {[576, 620, 665, 709, 754, 799, 845].map((y) => h(y, 700, 951, `l${y}`))}
      {[559, 702, 750, 798, 845].map((y) => h(y, 951, 1196, `m${y}`))}
      {[565, 598, 631, 665, 698, 731].map((y) => h(y, 1196, 1488, `r${y}`))}
      {v(778, 531, 845, "a")}
      {v(951, 531, 878, "b")}
      {v(1196, 531, 878, "c")}
      {v(1329, 531, 731, "d")}
      {v(1412, 531, 731, "e")}
      <rect x="700" y="878" width="788" height="5" fill="#000" />
      <line x1="1320.5" x2="1320.5" y1="883" y2="941" stroke="#000" strokeWidth="1.5" />
      <text x="944" y="958" textAnchor="middle" fontSize="62" fontFamily="Liberation Sans" fill="#000">2</text>
      <text x="726" y="564" fontSize="23" fill="#333" fontFamily="Noto Sans CJK SC">号</text>
      <rect x="712" y="545" width="1.5" height="20" fill="#333" />
      <rect x="791" y="529" width="58" height="50" fill="#808080" />
      <rect x="799" y="537" width="41" height="34" fill="#fff" />
      {[794, 819, 845].flatMap((x) =>
        [532, 554, 576].map((y) =>
          x === 819 && y === 554 ? null : <rect key={`${x}${y}`} x={x - 3} y={y - 3.5} width={6} height={7} fill="#d40000" stroke="#400" strokeWidth={0.7} />
        )
      )}
    </svg>
  );
};

const Mag = ({ children }: { children?: React.ReactNode }) => (
  <svg width="22" height="22" viewBox="0 0 22 22">
    <circle cx="13" cy="8" r="6.5" fill="#eef2f4" stroke="#7c8f9a" strokeWidth="1.4" />
    <path d="M8 13 L2 20" stroke="#3f8fb0" strokeWidth="3" />
    {children}
  </svg>
);
const ViewBar = () => (
  <div className="absolute left-[484px] top-[1px] flex h-[24px] items-center">
    <div className="flex w-[26px] justify-center"><Mag><circle cx="13" cy="8" r="2" stroke="#555" fill="none" /></Mag></div>
    <div className="flex w-[26px] justify-center"><svg width="22" height="22" viewBox="0 0 22 22"><rect x="5" y="1" width="16" height="16" fill="#d8d8d8" stroke="#555" /><circle cx="10" cy="11" r="5" fill="#eee" stroke="#7c8f9a" /><path d="M6 15 L2 20" stroke="#3f8fb0" strokeWidth="3" /></svg></div>
    <div className="flex w-[26px] justify-center"><Mag><rect x="8" y="1" width="12" height="10" fill="none" stroke="#555" strokeDasharray="2 1.5" /></Mag></div>
    <div className="flex w-[26px] justify-center"><svg width="24" height="22" viewBox="0 0 24 22"><path d="M2 16 L18 3 L21 7 L7 20 Z" fill="#d9d9d9" stroke="#666" /><path d="M22 15 H12 M15 12 L12 15 L15 18" stroke="#2f7ea8" strokeWidth="2" fill="none" /></svg></div>
    <div className="flex w-[26px] justify-center"><svg width="22" height="22" viewBox="0 0 22 22"><path d="M18 17 C12 22 3 18 3 11 C3 5 9 2 15 4" stroke="#5aa5bf" strokeWidth="3.2" fill="none" /><polygon points="13,0 21,4 13,9" fill="#2f7ea8" /></svg></div>
    <div className="flex w-[26px] justify-center"><svg width="22" height="22" viewBox="0 0 22 22"><circle cx="8" cy="11" r="6.5" fill="#4f88a8" stroke="#333" /><rect x="11" y="7" width="9" height="10" fill="#f0b429" stroke="#7a5a10" /><path d="M5 15 H12" stroke="#222" strokeWidth="2" /></svg></div>
    <div className="flex w-[22px] justify-center"><svg width="20" height="22" viewBox="0 0 20 22"><path d="M3 5 L13 3 L18 6 V19 L8 21 L3 18 Z" fill="#d6d6cf" stroke="#c0c0b8" /></svg></div>
    <div className="flex w-[16px] justify-center"><Caret c="#aaa" /></div>
    <div className="flex w-[26px] justify-center"><svg width="24" height="18" viewBox="0 0 24 18"><path d="M1 9 C6 1 18 1 23 9 C18 17 6 17 1 9 Z" fill="#bdbdb5" /><circle cx="12" cy="9" r="4" fill="#555" /></svg></div>
    <div className="flex w-[14px] justify-center"><Caret c="#aaa" /></div>
    <div className="flex w-[28px] justify-center"><svg width="18" height="18" viewBox="0 0 18 18"><circle cx="9" cy="8" r="7" fill="#d6d6cc" stroke="#c4c4ba" /><circle cx="7" cy="6" r="2.5" fill="#eee" /><rect x="6" y="15" width="6" height="2" fill="#c4c4ba" /></svg></div>
  </div>
);

const WinCtl = () => (
  <div className="absolute left-[1097px] top-0 flex h-[24px] items-center">
    <div className="flex w-[26px] justify-center"><div className="flex h-[13px] w-[12px] items-center justify-center border border-[#8a8a8a] bg-[#e9e9e1]"><div className="h-0 w-0 border-y-[3px] border-r-[4px] border-y-transparent border-r-[#555]" /></div></div>
    <div className="flex w-[26px] justify-center"><div className="flex h-[13px] w-[12px] items-center justify-center border border-[#8a8a8a] bg-[#e9e9e1]"><div className="h-0 w-0 border-y-[3px] border-l-[4px] border-y-transparent border-l-[#555]" /></div></div>
    <div className="flex w-[26px] justify-center pt-[10px]"><div className="h-[2px] w-[10px] bg-[#777]" /></div>
    <div className="flex w-[26px] justify-center"><svg width="15" height="14" viewBox="0 0 15 14"><path d="M4 4 V1 H14 V9 H11 M1 4 H11 V13 H1 Z" stroke="#777" fill="none" /></svg></div>
    <div className="flex w-[26px] justify-center"><X size={15} color="#8b8b8b" strokeWidth={1.4} /></div>
  </div>
);

const TabCell = ({ children, active }: { children: React.ReactNode; active?: boolean }) => (
  <div className={`flex h-[30px] items-center justify-center border-b border-[#8f8f8f] ${active ? "bg-[#f7f7f7]" : "bg-[#d9d9d9]"}`}>{children}</div>
);
const SideTabs = () => (
  <div className="absolute left-[1215px] top-[53px] w-[33px] border-y border-l border-[#8f8f8f]">
    <TabCell>
      <svg width="20" height="20" viewBox="0 0 20 20"><path d="M1 10 L10 2 L19 10" stroke="#1f7aa6" strokeWidth="2" fill="none" /><path d="M4 9 V18 H16 V9 M8 18 V12 H12 V18" stroke="#333" fill="#fff" /></svg>
    </TabCell>
    <TabCell>
      <svg width="18" height="22" viewBox="0 0 18 22"><path d="M2 6 V19 L5 21 V8 Z M6 7 V20 L9 21 V8 Z M10 6 V20 L13 19 V5 Z M14 4 V18 L16 16 V2 Z" fill="#fff" stroke="#333" /></svg>
    </TabCell>
    <TabCell>
      <svg width="22" height="18" viewBox="0 0 22 18"><path d="M1 16 V2 H7 L9 4 H17 V7" stroke="#333" fill="none" /><path d="M1 16 L5 7 H21 L17 16 Z" stroke="#333" fill="#eee" /></svg>
    </TabCell>
    <TabCell><PropIc /></TabCell>
    <TabCell>
      <svg width="20" height="20" viewBox="0 0 20 20"><circle cx="10" cy="10" r="8.5" fill="#3a78c8" /><path d="M10 10 L3 4 A9 9 0 0 1 16 3 Z" fill="#d83a2e" /><path d="M10 10 L16 3 A9 9 0 0 1 18 14 Z" fill="#72b83a" /><path d="M10 10 L18 14 A9 9 0 0 1 9 19 Z" fill="#f0c030" /></svg>
    </TabCell>
    <div className="flex h-[30px] items-center justify-center bg-[#f7f7f7]"><ListIc /></div>
  </div>
);

const Canvas = () => (
  <div className="relative flex min-w-0 flex-1 overflow-hidden bg-[#f3f3f3]">
    <div className="w-[1233px] shrink-0 bg-[#e4e4da]">
      <Drawing />
    </div>
    <div className="absolute left-[1240px] top-[454px] bottom-[33px] w-px bg-[#a8a8a8]" />
    <ViewBar />
    <WinCtl />
    <div className="absolute left-[1124px] top-[29px]"><Check size={32} color="#b7d3ad" strokeWidth={5} /></div>
    <div className="absolute left-[1166px] top-[59px]"><X size={30} color="#dcb6ad" strokeWidth={5.5} /></div>
    <SideTabs />
  </div>
);

/* ---------- right pane ---------- */
const RightPane = () => (
  <div className="flex w-[138px] shrink-0 flex-col overflow-hidden border-l border-[#9a9a9a] bg-[#f7f7f7] text-[15px] text-[#111]">
    <div className="flex h-[24px] shrink-0 items-center border-b-2 border-[#3a3a3a] bg-[#a9abae] pl-[6px]">
      <ChevronsLeft size={16} strokeWidth={2.6} color="#222" />
    </div>
    <div className="ml-[4px] flex h-[36px] shrink-0 items-center bg-[linear-gradient(100deg,#6b7083,#9ea2b0)] pl-[57px]">
      <div className="flex h-[26px] flex-1 items-center bg-[#f6f6f6] pl-[57px] text-[16px] text-[#999] whitespace-nowrap">应用</div>
    </div>
    <div className="ml-[10px] mt-[7px] h-[145px] whitespace-nowrap bg-[#fdfd6e] pl-[6px] pt-[6px] leading-[19.4px]">
      <div>没有找到工程图文件模板</div>
      <div>标签编制程序。</div>
      <div className="h-[19.4px]" />
      <div>如果您已有模板，</div>
      <div>自定义属性文件'中</div>
      <div className="h-[19.4px]" />
      <div>按 F5 来刷新页面。</div>
    </div>
    <div className="ml-[117px] mt-[13px] h-[37px] flex-none border border-[#8f8f8f] bg-[#e6e6e6]" />
    <div className="mb-px ml-[3px] mt-auto h-[50px] shrink-0 bg-[linear-gradient(180deg,#747889,#8b8f9f)]" />
  </div>
);

/* ---------- bottom bars ---------- */
const Dots = () => <div className="h-[24px] w-[4px] bg-[repeating-linear-gradient(180deg,#999,#999_1px,transparent_1px,transparent_3px)]" />;
const SheetRow = () => (
  <div className="flex h-[20px] shrink-0 bg-[#f7f7f7]">
    <div className="w-[24px] shrink-0" />
    <div className="flex h-[20px] w-[80px] shrink-0 items-center bg-[#a9a9c0]">
      <div className="flex w-[20px] justify-center text-[9px] leading-none text-[#666]">|◀</div>
      <div className="flex w-[20px] justify-center text-[9px] leading-none text-[#666]">◀</div>
      <div className="flex w-[20px] justify-center text-[9px] leading-none text-[#666]">▶</div>
      <div className="flex w-[20px] justify-center text-[9px] leading-none text-[#666]">▶|</div>
    </div>
    <div className="ml-[16px] flex w-[62px] shrink-0 items-center gap-[2px] text-[15px] leading-none text-[#222]">
      <svg width="14" height="14" viewBox="0 0 14 14"><path d="M2 12 V2 H8 L12 6 V12 Z" fill="#fff" stroke="#222" /><path d="M2 9 H13" stroke="#222" /></svg>
      Sheet1
    </div>
    <div className="ml-[570px] h-[20px] w-[2px] shrink-0 border-l border-black" />
    <div className="h-[20px] w-[734px] shrink-0 border-b border-[#a8b4b8] bg-[#f0f0f0]" />
  </div>
);
const BottomBar = () => (
  <div className="flex h-[33px] shrink-0 items-start bg-[#f8f8f8] pl-[4px] pt-[6px]">
    <Dots />
    <div className="ml-[8px] flex h-[25px] w-[97px] items-center rounded-[2px] border border-[#d4d4d4] bg-white pl-[4px] pr-[6px] text-[15px] text-[#333]">
      -无-
      <ChevronDown size={14} strokeWidth={1.4} color="#666" className="ml-auto" />
    </div>
    <svg width="22" height="16" viewBox="0 0 22 16" className="ml-[3px] mt-[4px]"><path d="M2 8 L14 2 L20 6 L8 13 Z" fill="#ddd" stroke="#bbb" /></svg>
    <div className="ml-[12px] h-[26px] w-px bg-[#bbb]" />
    <div className="ml-[3px]"><Dots /></div>
  </div>
);
const StatusBar = () => (
  <div className="flex h-[22px] shrink-0 items-center border-t border-[#9a9a9a] bg-[#eeeeee] pl-[2px] text-[14px] leading-none text-[#222] whitespace-nowrap">
    <span className="text-[15.3px]">SOLIDWORKS Premium 2</span>
    <div className="ml-auto flex">
      <span className="w-[108px]">175.33mm</span>
      <span className="w-[89px]">72.45mm</span>
      <span className="w-[38px]">0mm</span>
      <span className="w-[64px]">欠定义</span>
      <span className="w-[51px] text-[14.5px]">在编辑</span>
      <span className="w-[100px] text-[14.5px]">图纸格式</span>
      <span className="w-[29px] text-[#aaa]">1 : 1</span>
    </div>
  </div>
);

/* ---------- format toolbar ---------- */
const FormatBar = () => (
  <div className="absolute left-[804px] top-[449px] h-[68px] w-[804px] rounded-[5px] border border-[#c6c6c6] bg-[#f3f3f3] shadow-[0_4px_12px_rgba(0,0,0,0.2)]">
    <div className="flex h-[40px] items-start pl-[9px] pr-[1px] pt-[8px]">
      <span className="text-[14px] leading-[20px] text-[#aaa]">格式化</span>
      <div className="ml-auto flex h-[25px] w-[24px] items-center justify-center bg-[#dfdfdf] text-[11px] text-[#ccc]">x</div>
    </div>
    <div className="flex h-[25px] items-center text-[#333]">
      <div className="flex w-[34px] justify-center">
        <svg width="16" height="20" viewBox="0 0 16 20"><path d="M1 1 H11 L15 5 V19 H1 Z" fill="#eee" stroke="#c4c4c4" /><text x="4" y="16" fontSize="11" fontFamily="Liberation Serif" fill="#bbb">A</text></svg>
      </div>
      <div className="flex h-[25px] w-[210px] items-center border border-[#b5b5b5] border-b-[#e0e0e0] bg-white pl-[3px] pr-[5px] font-['Open_Sans',sans-serif] text-[15px] tracking-[0.2px]">
        Century Gothic
        <ChevronDown size={14} strokeWidth={1.4} color="#666" className="ml-auto" />
      </div>
      <div className="flex h-[25px] w-[50px] items-center border-y border-r border-[#b5b5b5] border-b-[#e0e0e0] bg-white pl-[4px] pr-[3px] font-['Open_Sans',sans-serif] text-[15px]">
        12
        <ChevronDown size={14} strokeWidth={1.4} color="#666" className="ml-auto" />
      </div>
      <div className="flex h-[25px] w-[80px] items-center pl-[3px] font-['Open_Sans',sans-serif] text-[15.5px]">3.18mm<div className="ml-auto mr-[4px] h-[22px] w-px bg-[#c9c9c9]" /></div>
      <div className="flex w-[27px] flex-col items-center">
        <span className="font-['Liberation_Serif',serif] text-[22px] leading-[19px] text-[#222]">A</span>
        <div className="h-[3px] w-[17px] bg-[linear-gradient(90deg,#e03030,#f0c030,#30a040,#3070d0)]" />
      </div>
      <span className="w-[27px] text-center font-['Liberation_Serif',serif] text-[23px] leading-none">B</span>
      <span className="w-[27px] text-center font-['Liberation_Serif',serif] text-[23px] italic leading-none">I</span>
      <span className="w-[27px] text-center font-['Liberation_Serif',serif] text-[23px] underline leading-none">U</span>
      <span className="w-[27px] text-center font-['Liberation_Serif',serif] text-[23px] line-through leading-none">S</span>
      <div className="mx-[4px] h-[22px] w-px bg-[#bbb]" />
      <div className="flex h-[25px] w-[27px] items-center justify-center border border-[#999] bg-[#c8c8c8]"><Align k="l" s={19} c="#222" /></div>
      <div className="flex w-[27px] justify-center"><Align k="c" s={19} c="#222" /></div>
      <div className="flex w-[27px] justify-center"><Align k="r" s={19} c="#222" /></div>
      <div className="mx-[3px] h-[22px] w-px bg-[#bbb]" />
      <div className="flex w-[27px] justify-center"><WidthIc /></div>
      <div className="flex w-[27px] justify-center text-center font-['Liberation_Sans',sans-serif] text-[11px] leading-[10px] font-bold text-[#222]">XX<br />XX</div>
      <div className="flex w-[27px] justify-center">
        <svg width="18" height="18" viewBox="0 0 18 18"><path d="M7 3 H18 M7 9 H18 M7 15 H18" stroke="#333" strokeWidth="1.5" /><circle cx="2.5" cy="3" r="2" fill="#2f7ea8" /><circle cx="2.5" cy="9" r="2" fill="#2f7ea8" /><circle cx="2.5" cy="15" r="2" fill="#2f7ea8" /></svg>
      </div>
      <div className="flex w-[27px] justify-center">
        <svg width="18" height="18" viewBox="0 0 18 18"><path d="M7 3 H18 M7 9 H18 M7 15 H18" stroke="#333" strokeWidth="1.5" /><text x="0" y="6" fontSize="6" fill="#2f7ea8">1</text><text x="0" y="12" fontSize="6" fill="#2f7ea8">2</text><text x="0" y="18" fontSize="6" fill="#2f7ea8">3</text></svg>
      </div>
      <div className="flex w-[27px] justify-center">
        <svg width="18" height="20" viewBox="0 0 18 20"><path d="M0 1 H18 M0 19 H18 M9 5 H18 M9 9 H18 M9 13 H18" stroke="#333" strokeWidth="1.4" /><path d="M8 9 H1 M4 5 L0 9 L4 13" stroke="#1f7a8c" strokeWidth="2" fill="none" /></svg>
      </div>
      <div className="flex w-[27px] justify-center">
        <svg width="18" height="20" viewBox="0 0 18 20"><path d="M0 1 H18 M0 19 H18 M9 5 H18 M9 9 H18 M9 13 H18" stroke="#333" strokeWidth="1.4" /><path d="M0 9 H7 M4 5 L8 9 L4 13" stroke="#1f7a8c" strokeWidth="2" fill="none" /></svg>
      </div>
      <div className="flex w-[27px] justify-center">
        <svg width="18" height="22" viewBox="0 0 18 22"><path d="M4 2 V20 M1 5 L4 1 L7 5 M1 17 L4 21 L7 17" stroke="#222" strokeWidth="1.8" fill="none" /><path d="M10 5 H18 M10 9 H18 M10 13 H18 M10 17 H18" stroke="#333" strokeWidth="1.4" /></svg>
      </div>
    </div>
  </div>
);

/* ---------- dialog ---------- */
const Radio = ({ on, gray }: { on?: boolean; gray?: boolean }) =>
  on ? (
    <div className={`flex h-[16px] w-[16px] shrink-0 items-center justify-center rounded-full ${gray ? "bg-[#b5b5b5]" : "bg-[#0f62a8]"}`}>
      <div className="h-[7px] w-[7px] rounded-full bg-white" />
    </div>
  ) : (
    <div className={`h-[16px] w-[16px] shrink-0 rounded-full border ${gray ? "border-[#bbb] bg-[#f6f6f6]" : "border-[#555] bg-[#f6f6f6]"}`} />
  );

const Dialog = () => (
  <div className="absolute left-[175px] top-[473px] h-[550px] w-[537px] rounded-[9px] bg-[#f0f0f0] text-[16px] leading-[20px] text-[#1e1e1e] shadow-[-3px_0_22px_rgba(0,0,0,0.38)]">
    <div className="flex h-[38px] items-center rounded-t-[9px] bg-[#f8f0f0] pb-[4px] pl-[11px] pr-[12px]">
      <div className="flex h-[15px] w-[18px] border border-[#bbb] bg-white">
        <div className="ml-px mt-px h-[11px] w-[10px] bg-[linear-gradient(90deg,#28736a,#8fb5ae)]" />
      </div>
      <span className="ml-[8px] text-[15px]">链接到属性</span>
      <X size={19} strokeWidth={1.3} color="#222" className="ml-auto" />
    </div>
    <div className="flex h-[458px]">
      <div className="relative ml-[13px] mt-[13px] h-[445px] w-[372px] shrink-0 rounded-[2px] border border-[#d6d6d6] pl-[19px]">
        <span className="absolute -top-[11px] left-[8px] bg-[#f0f0f0] pr-[1px] text-[15.9px]">使用来自此项的自定义属性</span>
        <div className="mt-[21px] flex h-[20px] items-center gap-[3px]"><Radio /> 当前文件</div>
        <div className="mt-[8px] flex h-[20px] items-center gap-[3px]"><Radio on /> 此处发现的模型</div>
        <div className="ml-px mt-[14px] flex h-[24px] w-[326px] items-center rounded-[2px] border border-[#d0d0d0] bg-white pl-[3px] pr-[3px] text-[16px]">
          “图纸属性”中指定的工程图视图
          <ChevronDown size={15} strokeWidth={1.3} color="#555" className="ml-auto" />
        </div>
        <div className="ml-px mt-[19px] h-[20px]">选择:</div>
        <div className="ml-px mt-[9px] h-[29px] w-[329px] border border-[#b4b4b4] bg-[#eeeeee] text-[15.5px] leading-[16px]">
          零件<span className="text-[12px]">1</span>
        </div>
        <div className="ml-px mt-[20px] h-[20px]">属性名称:</div>
        <div className="ml-px mt-[10px] flex h-[25px] w-[329px] items-center rounded-[2px] border border-[#1b6a7d] bg-white pl-[3px] pr-[1px]">
          <div className="h-[18px] w-px bg-[#111]" />
          <ChevronDown size={15} strokeWidth={1.3} color="#555" className="ml-auto" />
        </div>
        <div className="ml-px mt-[19px] h-[20px]">评估值:</div>
        <div className="ml-px mt-[13px] h-[28px] w-[329px] border border-[#f8f8f8] bg-[#efefef]" />
        <div className="ml-px mt-[24px] flex h-[20px] items-center text-[#8c8c8c]">
          <span className="w-[103px]">日期格</span>
          <Radio on gray />
          <span className="ml-[3px] w-[49px]">长</span>
          <Radio gray />
          <span className="ml-[3px] w-[63px]">短</span>
          <CheckBox gray />
          <span className="ml-[3px] whitespace-nowrap">显示时间</span>
        </div>
      </div>
      <div className="ml-[7px] mt-[168px] flex h-[27px] w-[91px] items-center justify-center rounded-[3px] border border-[#d8d8d8] bg-white whitespace-nowrap text-[16px]">
        文件属性<span className="text-[11px]">(F)</span>
      </div>
    </div>
    <div className="ml-[164px] mt-[12px] flex text-[15.5px]">
      <div className="flex h-[26px] w-[84px] items-center justify-center rounded-[3px] bg-[#f7f7f7] text-[#888]">确定</div>
      <div className="ml-[30px] flex h-[26px] w-[85px] items-center justify-center rounded-[3px] border border-[#cfcfcf] bg-white">取消</div>
      <div className="ml-[29px] flex h-[26px] w-[85px] items-center justify-center rounded-[3px] border border-[#cfcfcf] bg-white">帮助</div>
    </div>
    <svg width="14" height="14" viewBox="0 0 14 14" className="absolute left-[522px] top-[529px]">
      <path d="M13 1 L1 13 M13 5 L5 13 M13 9 L9 13" stroke="#777" strokeWidth="1" />
    </svg>
  </div>
);

/* ---------- annotations ---------- */
function arrow(x1: number, y1: number, x2: number, y2: number, hl: number, hw: number, sw: number) {
  const len = Math.hypot(x2 - x1, y2 - y1);
  const dx = (x2 - x1) / len;
  const dy = (y2 - y1) / len;
  const nx = -dy;
  const ny = dx;
  const nb = [x2 - dx * hl * 0.8, y2 - dy * hl * 0.8];
  const bb = [x2 - dx * hl, y2 - dy * hl];
  const p = (a: number[], k: number) => `${a[0] + nx * k},${a[1] + ny * k}`;
  return [p([x1, y1], 0.8), p(nb, sw / 2), p(bb, hw / 2), `${x2},${y2}`, p(bb, -hw / 2), p(nb, -sw / 2), p([x1, y1], -0.8)].join(" ");
}
const Arrows = () => (
  <svg width="1641" height="1016" viewBox="0 0 1641 1016" className="pointer-events-none absolute left-0 top-0">
    <polygon fill={RED} points={arrow(416, 194, 283, 108, 46, 30, 9)} />
    <polygon fill={RED} points={arrow(721, 440, 790, 520, 30, 26, 8)} />
    <polygon fill={RED} points={arrow(232, 450, 147, 485, 36, 26, 8)} />
    <polygon fill={RED} points={arrow(505, 526, 409, 564, 38, 28, 8)} />
    <polygon fill={RED} points={arrow(668, 835, 569, 796, 40, 28, 8)} />
    <polygon fill={RED} points={arrow(211, 938, 319, 968, 34, 28, 8)} />
  </svg>
);
const RedBox = ({ className }: { className: string }) => (
  <div className={`pointer-events-none absolute box-border rounded-[2px] border-[5px] border-[#ee5a5a] ${className}`} />
);
const Num = ({ className, children }: { className: string; children: React.ReactNode }) => (
  <div className={`absolute whitespace-nowrap font-['Noto_Sans','Noto_Sans_CJK_SC',sans-serif] text-[#e8605e] ${className}`}>{children}</div>
);
const Annotations = () => (
  <>
    <RedBox className="left-[223px] top-[32px] h-[85px] w-[56px]" />
    <RedBox className="left-[95px] top-[482px] h-[35px] w-[51px]" />
    <RedBox className="left-[782px] top-[522px] h-[62px] w-[180px]" />
    <RedBox className="left-[186px] top-[565px] h-[40px] w-[216px]" />
    <RedBox className="left-[492px] top-[737px] h-[59px] w-[76px]" />
    <RedBox className="left-[324px] top-[966px] h-[50px] w-[122px]" />
    <Arrows />
    <Num className="left-[429px] top-[190px] text-[36px] leading-[40px]">1</Num>
    <Num className="left-[594px] top-[388px] text-[30px] leading-[40px]">2 点击放置注释</Num>
    <Num className="left-[243px] top-[415px] text-[34px] leading-[40px]">3</Num>
    <Num className="left-[525px] top-[494px] text-[32px] leading-[40px]">4</Num>
    <Num className="left-[680px] top-[839px] text-[30px] leading-[40px]">5 选择自己创建的属性</Num>
    <Num className="left-[181px] top-[922px] text-[32px] leading-[40px]">6</Num>
  </>
);

export default function App() {
  return (
    <div className="relative flex h-[1016px] w-[1641px] flex-col overflow-hidden bg-white font-['Noto_Sans','Noto_Sans_CJK_SC',sans-serif]">
      <TopBar />
      <Ribbon />
      <div className="flex h-[844px] shrink-0">
        <div className="flex w-[1503px] shrink-0 flex-col">
          <TabRow />
          <div className="flex h-[795px] shrink-0">
            <VRuler />
            <Panel />
            <Canvas />
          </div>
          <SheetRow />
        </div>
        <RightPane />
      </div>
      <BottomBar />
      <StatusBar />
      <FormatBar />
      <Dialog />
      <Annotations />
    </div>
  );
}
